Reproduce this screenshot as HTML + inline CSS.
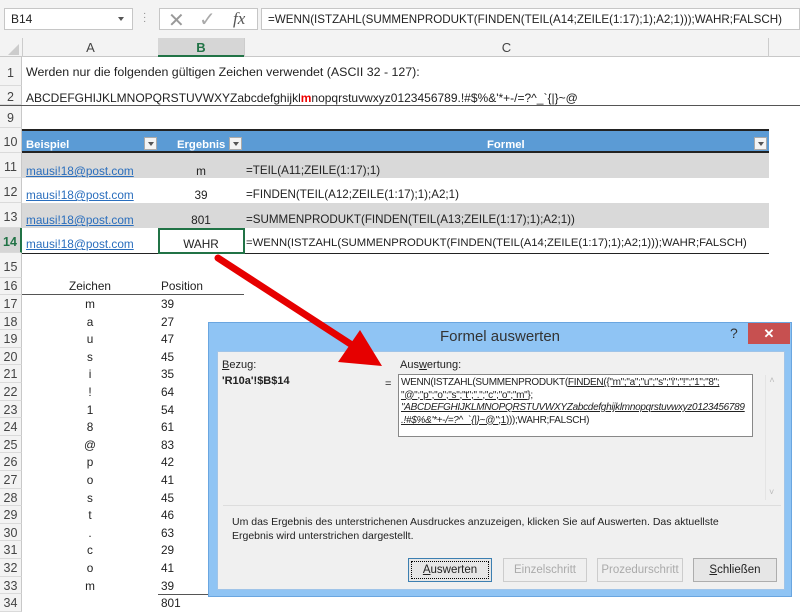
<!DOCTYPE html>
<html><head><meta charset="utf-8"><style>
*{margin:0;padding:0;box-sizing:border-box}
body{width:800px;height:612px;overflow:hidden;background:#fff;font-family:"Liberation Sans",sans-serif;font-size:12px;color:#222;position:relative}
.a{position:absolute;white-space:nowrap}
.rh{position:absolute;left:0;width:22px;text-align:center;background:#f3f3f3;color:#444;font-size:12.5px;border-bottom:1px solid #dadada;border-right:1px solid #c8c8c8}
.ln{color:#2a6ebd;text-decoration:underline}
.dd{position:absolute;width:13px;height:13px;background:#f4f4f4;border:1px solid #aaa}
.dd:after{content:"";position:absolute;left:3px;top:4px;border-left:3px solid transparent;border-right:3px solid transparent;border-top:4px solid #555}
.btn{position:absolute;top:558px;height:24px;border:1px solid #adadad;background:#e6e6e6;text-align:center;line-height:22px;font-size:11.5px}
.t{font-size:11.8px}
</style></head><body>
<div class="a" style="left:0;top:0;width:800px;height:38px;background:#f3f3f3"></div>
<div class="a" style="left:4px;top:8px;width:129px;height:22px;background:#fff;border:1px solid #c6c6c6;padding:3px 6px;font-size:12px">B14</div>
<div class="a" style="left:118px;top:17px;border-left:3px solid transparent;border-right:3px solid transparent;border-top:4px solid #555"></div>
<div class="a" style="left:143px;top:12px;color:#888;font-size:10px;line-height:4px">·<br>·<br>·</div>
<div class="a" style="left:159px;top:8px;width:99px;height:22px;background:#fff;border:1px solid #c6c6c6"></div>
<div class="a" style="left:168px;top:8px;font-size:20px;color:#999">✕</div>
<div class="a" style="left:199px;top:7px;font-size:20px;color:#aaa">✓</div>
<div class="a" style="left:233px;top:9px;font-family:'Liberation Serif',serif;font-style:italic;font-size:17px;color:#555">fx</div>
<div class="a" style="left:261px;top:8px;width:539px;height:22px;background:#fff;border:1px solid #c6c6c6;padding:4px 6px;font-size:11.6px;overflow:hidden">=WENN(ISTZAHL(SUMMENPRODUKT(FINDEN(TEIL(A14;ZEILE(1:17);1);A2;1)));WAHR;FALSCH)</div>
<div class="a" style="left:0;top:38px;width:800px;height:19px;background:#f3f3f3;border-bottom:1px solid #c8c8c8"></div>
<div class="a" style="left:8px;top:44px;border-left:11px solid transparent;border-bottom:11px solid #ccc"></div>
<div class="a" style="left:22px;top:38px;width:136px;height:19px;text-align:center;font-size:13px;color:#444;line-height:19px;border-left:1px solid #ccc">A</div>
<div class="a" style="left:158px;top:38px;width:86px;height:19px;text-align:center;font-size:13px;font-weight:bold;color:#217346;line-height:19px;background:#d6d6d6;border-bottom:2px solid #217346">B</div>
<div class="a" style="left:244px;top:38px;width:525px;height:19px;text-align:center;font-size:13px;color:#444;line-height:19px;border-left:1px solid #ccc;border-right:1px solid #ccc">C</div>
<div class="rh" style="top:57px;height:29px;line-height:32px">1</div>
<div class="rh" style="top:86px;height:19px;line-height:22px">2</div>
<div class="rh" style="top:105px;height:23px;line-height:26px">9</div>
<div class="rh" style="top:128px;height:25px;line-height:28px">10</div>
<div class="rh" style="top:153px;height:25px;line-height:28px">11</div>
<div class="rh" style="top:178px;height:25px;line-height:28px">12</div>
<div class="rh" style="top:203px;height:25px;line-height:28px">13</div>
<div class="rh" style="top:228px;height:25px;line-height:28px;background:#d6d6d6;color:#217346;font-weight:bold;border-right:2px solid #217346">14</div>
<div class="rh" style="top:253px;height:25px;line-height:28px">15</div>
<div class="rh" style="top:278px;height:17px;line-height:17px">16</div>
<div id="rows"></div>
<div class="a" style="left:0;top:105px;width:800px;height:1px;background:#555"></div>
<div class="a" style="left:26px;top:65px;font-size:12.4px">Werden nur die folgenden gültigen Zeichen verwendet (ASCII 32 - 127):</div>
<div class="a" style="left:26px;top:91px;font-size:12px">ABCDEFGHIJKLMNOPQRSTUVWXYZabcdefghijkl<b style="color:#e00">m</b>nopqrstuvwxyz0123456789.!#$%&amp;'*+-/=?^_`{|}~@</div>
<div class="a" style="left:22px;top:129px;width:747px;height:24px;background:#5b9bd5;border-top:2px solid #222;border-bottom:2px solid #222"></div>
<div class="a" style="left:26px;top:139px;color:#fff;font-weight:bold;font-size:11.3px">Beispiel</div>
<div class="a" style="left:177px;top:139px;color:#fff;font-weight:bold;font-size:11.3px">Ergebnis</div>
<div class="a" style="left:487px;top:139px;color:#fff;font-weight:bold;font-size:11.3px">Formel</div>
<div class="dd" style="left:144px;top:137px"></div>
<div class="dd" style="left:229px;top:137px"></div>
<div class="dd" style="left:754px;top:137px"></div>
<div class="a" style="left:22px;top:153px;width:747px;height:25px;background:#d9d9d9"></div>
<div class="a" style="left:22px;top:203px;width:747px;height:25px;background:#d9d9d9"></div>
<div class="a" style="left:22px;top:253px;width:747px;height:1px;background:#222"></div>
<div class="a" style="left:158px;top:228px;width:87px;height:26px;border:2px solid #217346"></div>
<div class="a ln t" style="left:26px;top:164px">mausi!18@post.com</div>
<div class="a ln t" style="left:26px;top:188px">mausi!18@post.com</div>
<div class="a ln t" style="left:26px;top:213px">mausi!18@post.com</div>
<div class="a ln t" style="left:26px;top:237px">mausi!18@post.com</div>
<div class="a t" style="left:158px;width:86px;text-align:center;top:164px">m</div>
<div class="a t" style="left:158px;width:86px;text-align:center;top:188px">39</div>
<div class="a t" style="left:158px;width:86px;text-align:center;top:213px">801</div>
<div class="a t" style="left:158px;width:86px;text-align:center;top:237px">WAHR</div>
<div class="a" style="left:246px;top:164px;font-size:11.6px">=TEIL(A11;ZEILE(1:17);1)</div>
<div class="a" style="left:246px;top:188px;font-size:11.6px">=FINDEN(TEIL(A12;ZEILE(1:17);1);A2;1)</div>
<div class="a" style="left:246px;top:213px;font-size:11.6px">=SUMMENPRODUKT(FINDEN(TEIL(A13;ZEILE(1:17);1);A2;1))</div>
<div class="a" style="left:246px;top:237px;font-size:11.3px">=WENN(ISTZAHL(SUMMENPRODUKT(FINDEN(TEIL(A14;ZEILE(1:17);1);A2;1)));WAHR;FALSCH)</div>
<div class="a t" style="left:22px;width:136px;text-align:center;top:279px">Zeichen</div>
<div class="a t" style="left:161px;top:279px">Position</div>
<div class="a" style="left:22px;top:294px;width:222px;height:1px;background:#555"></div>
<div class="a" style="left:158px;top:594px;width:86px;height:1px;background:#555"></div>
<div id="list"></div>
<div class="a" style="left:208px;top:322px;width:584px;height:275px;background:#8fc4f4;border:1px solid #6aa6e0"></div>
<div class="a" style="left:208px;top:328px;width:584px;text-align:center;font-size:15px;color:#333">Formel auswerten</div>
<div class="a" style="left:730px;top:325px;font-size:14px;color:#333">?</div>
<div class="a" style="left:748px;top:323px;width:42px;height:21px;background:#c75050;color:#fff;text-align:center;font-size:13px;line-height:21px;font-weight:bold">✕</div>
<div class="a" style="left:217px;top:351px;width:568px;height:239px;background:#f0f0f0;border:1px solid #a0c4e8"></div>
<div class="a" style="left:222px;top:359px;font-size:11px"><u>B</u>ezug:</div>
<div class="a" style="left:222px;top:375px;font-size:11px;font-weight:bold">'R10a'!$B$14</div>
<div class="a" style="left:385px;top:378px;font-size:11px">=</div>
<div class="a" style="left:400px;top:359px;font-size:11px">Aus<u>w</u>ertung:</div>
<div class="a" style="left:398px;top:374px;width:355px;height:63px;background:#fff;border:1px solid #888;padding:2px 2px;font-size:10px;line-height:12.5px;letter-spacing:-0.3px;overflow:hidden">WENN(ISTZAHL(SUMMENPRODUKT(<u>FINDEN({"m";"a";"u";"s";"i";"!";"1";"8";</u><br><u>"@";"p";"o";"s";"t";".";"c";"o";"m"};</u><br><u><i>"ABCDEFGHIJKLMNOPQRSTUVWXYZabcdefghijklmnopqrstuvwxyz0123456789</i></u><br><u><i>.!#$%&amp;'*+-/=?^_`{|}~@"</i>;1)</u>));WAHR;FALSCH)</div>
<div class="a" style="left:765px;top:375px;width:13px;height:125px;border-left:1px solid #e4e4e4;color:#bbb;font-size:9px;text-align:center">˄<div style="position:absolute;top:112px;left:3px">˅</div></div>
<div class="a" style="left:223px;top:505px;width:558px;height:1px;background:#ddd"></div>
<div class="a" style="left:232px;top:515px;font-size:10.5px;line-height:14px">Um das Ergebnis des unterstrichenen Ausdruckes anzuzeigen, klicken Sie auf Auswerten. Das aktuellste<br>Ergebnis wird unterstrichen dargestellt.</div>
<div class="btn" style="left:408px;width:84px;border-color:#3c7fb1;outline:1px dotted #000;outline-offset:-4px"><u>A</u>uswerten</div>
<div class="btn" style="left:503px;width:84px;color:#aaa;border-color:#ccc;background:#efefef">Einzelschritt</div>
<div class="btn" style="left:597px;width:86px;color:#aaa;border-color:#ccc;background:#efefef">Prozedurschritt</div>
<div class="btn" style="left:693px;width:84px"><u>S</u>chließen</div>
<svg class="a" style="left:0;top:0" width="800" height="612"><line x1="218" y1="258" x2="352" y2="345" stroke="#e60000" stroke-width="7" stroke-linecap="round"/><polygon points="382,366 338,362 360,330" fill="#e60000"/></svg>
<script>
var ch="m a u s i ! 1 8 @ p o s t . c o m".split(" "),ps=[39,27,47,45,35,64,54,61,83,42,41,45,46,63,29,41,39];
var h="",l="";
for(var i=0;i<18;i++){var t=295+i*17.6;h+='<div class="rh" style="top:'+t+'px;height:17.6px;line-height:18px">'+(17+i)+'</div>';
if(i<17){l+='<div class="a t" style="left:22px;width:136px;text-align:center;top:'+(t+2)+'px">'+ch[i]+'</div><div class="a t" style="left:161px;top:'+(t+2)+'px">'+ps[i]+'</div>';}
else l+='<div class="a t" style="left:161px;top:'+(t+2)+'px">801</div>';}
document.getElementById("rows").outerHTML=h;document.getElementById("list").outerHTML=l;
</script>
</body></html>
